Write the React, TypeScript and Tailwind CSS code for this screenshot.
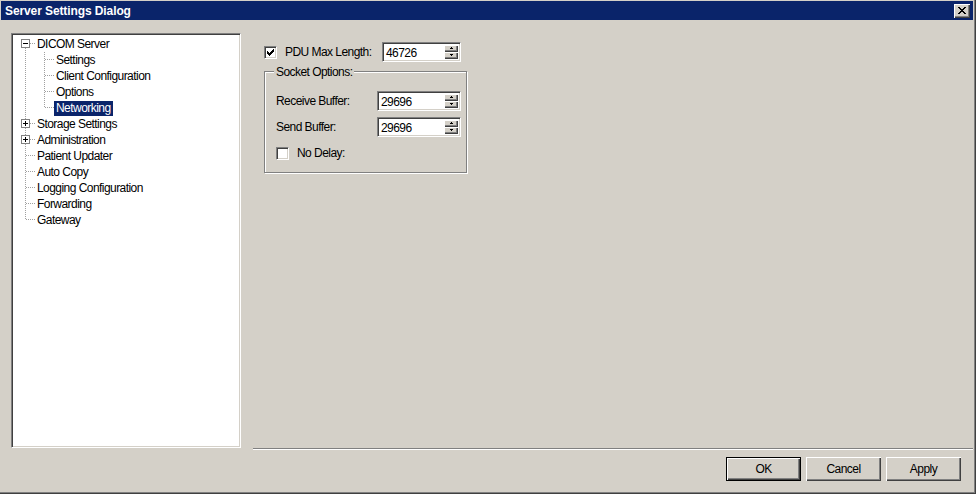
import React from "react";

const FONT = "font-['Liberation_Sans',Arial,sans-serif]";

type Row = {
  label: string;
  level: 0 | 1;
  box?: "minus" | "plus";
  first?: boolean;
  last?: boolean;
  lastChild?: boolean;
  selected?: boolean;
};

const rows: Row[] = [
  { label: "DICOM Server", level: 0, box: "minus", first: true },
  { label: "Settings", level: 1 },
  { label: "Client Configuration", level: 1 },
  { label: "Options", level: 1 },
  { label: "Networking", level: 1, selected: true, lastChild: true },
  { label: "Storage Settings", level: 0, box: "plus" },
  { label: "Administration", level: 0, box: "plus" },
  { label: "Patient Updater", level: 0 },
  { label: "Auto Copy", level: 0 },
  { label: "Logging Configuration", level: 0 },
  { label: "Forwarding", level: 0 },
  { label: "Gateway", level: 0, last: true },
];

const dot = { stroke: "#a0a0a0", strokeDasharray: "1 1", shapeRendering: "crispEdges" as const, strokeWidth: 1 };

function TreeGutter({ r }: { r: Row }) {
  const w = r.level === 1 ? 41 : 22;
  return (
    <svg width={w} height={16} className="shrink-0 block">
      {r.level === 1 && <line x1={12.5} y1={0} x2={12.5} y2={16} {...dot} />}
      {r.level === 0 && !r.box && (
        <>
          <line x1={12.5} y1={0} x2={12.5} y2={r.last ? 8 : 16} {...dot} />
          <line x1={13} y1={7.5} x2={22} y2={7.5} {...dot} />
        </>
      )}
      {r.level === 0 && r.box && (
        <>
          {!r.first && <line x1={12.5} y1={0} x2={12.5} y2={3} {...dot} />}
          <line x1={12.5} y1={12} x2={12.5} y2={16} {...dot} />
          <line x1={17} y1={7.5} x2={22} y2={7.5} {...dot} />
          <rect x={8.5} y={3.5} width={8} height={8} fill="#fff" stroke="#808080" shapeRendering="crispEdges" />
          <line x1={10} y1={7.5} x2={15} y2={7.5} stroke="#000" shapeRendering="crispEdges" />
          {r.box === "plus" && <line x1={12.5} y1={5} x2={12.5} y2={10} stroke="#000" shapeRendering="crispEdges" />}
        </>
      )}
      {r.level === 1 && (
        <>
          <line x1={31.5} y1={0} x2={31.5} y2={r.lastChild ? 8 : 16} {...dot} />
          <line x1={32} y1={7.5} x2={41} y2={7.5} {...dot} />
        </>
      )}
    </svg>
  );
}

function Tree() {
  return (
    <div className="w-[230px] h-[415px] shrink-0 border border-t-[#808080] border-l-[#808080] border-b-white border-r-white shadow-[inset_1px_1px_0_#404040,inset_-1px_-1px_0_#d4d0c8] bg-white pl-[1px] pr-[2px] pt-[1px]">
      <div className="flex flex-col pt-[1px]">
        {rows.map((r) => (
          <div key={r.label} className="flex items-center h-[16px]">
            <TreeGutter r={r} />
            <span
              className={`h-[15px] flex items-center px-[2px] whitespace-nowrap ${
                r.selected ? "bg-[#0a246a] text-white" : "text-black"
              }`}
            >
              {r.label}
            </span>
          </div>
        ))}
      </div>
    </div>
  );
}

const checkPixels: [number, number][] = [
  [6, 0],
  [5, 1], [6, 1],
  [0, 2], [4, 2], [5, 2], [6, 2],
  [0, 3], [1, 3], [3, 3], [4, 3], [5, 3],
  [0, 4], [1, 4], [2, 4], [3, 4], [4, 4],
  [1, 5], [2, 5], [3, 5],
  [2, 6],
];

function Checkbox({ checked }: { checked?: boolean }) {
  return (
    <div className="w-[13px] h-[13px] shrink-0 bg-white border border-t-[#808080] border-l-[#808080] border-b-white border-r-white shadow-[inset_1px_1px_0_#404040,inset_-1px_-1px_0_#d4d0c8] flex items-center justify-center">
      {checked && (
        <svg width="7" height="7" viewBox="0 0 7 7" shapeRendering="crispEdges">
          {checkPixels.map(([x, y]) => (
            <rect key={`${x}-${y}`} x={x} y={y} width={1} height={1} fill="#000" />
          ))}
        </svg>
      )}
    </div>
  );
}

function SpinArrow({ up }: { up?: boolean }) {
  return (
    <div className="flex-1 bg-[#d4d0c8] shadow-[inset_1px_1px_0_#fff,inset_-1px_-1px_0_#404040,inset_-2px_-2px_0_#808080] flex items-center justify-center">
      <svg width="5" height="3" viewBox="0 0 5 3" shapeRendering="crispEdges">
        {up ? <path d="M2 0h1v1h1v1h-3v-1h1z" fill="#000" /> : <path d="M1 0h3v1h-1v1h-1v-1h-1z" fill="#000" />}
      </svg>
    </div>
  );
}

function Spin({ value, width }: { value: string; width: string }) {
  return (
    <div
      className={`${width} h-[20px] shrink-0 bg-white border border-t-[#808080] border-l-[#808080] border-b-white border-r-white shadow-[inset_1px_1px_0_#404040,inset_-1px_-1px_0_#d4d0c8] flex items-center pl-[3px] pr-[2px]`}
    >
      <span className="flex-1 text-black pt-[1px]">{value}</span>
      <div className="w-[14px] h-[14px] flex flex-col">
        <SpinArrow up />
        <SpinArrow />
      </div>
    </div>
  );
}

function Button({ label, def }: { label: string; def?: boolean }) {
  return (
    <div className={`w-[75px] h-[24px] ${def ? "border border-black" : ""}`}>
      <div className="w-full h-full bg-[#d4d0c8] shadow-[inset_1px_1px_0_#fff,inset_-1px_-1px_0_#404040,inset_-2px_-2px_0_#808080] flex items-center justify-center text-black">
        {label}
      </div>
    </div>
  );
}

export default function App() {
  return (
    <div
      className={`${FONT} text-[12px] tracking-[-0.55px] leading-none w-[976px] h-[494px] bg-[#d4d0c8] pt-[1px] pl-[1px] pr-[3px] pb-[3px] flex flex-col shadow-[inset_-1px_-1px_0_#404040,inset_-2px_-2px_0_#808080] overflow-hidden`}
    >
      {/* Title bar */}
      <div className="h-[19px] bg-[#0a246a] flex items-center justify-between pl-[4px] pr-[3px] shrink-0">
        <span className="text-white font-bold text-[12px] tracking-[-0.1px]">Server Settings Dialog</span>
        <div className="w-[16px] h-[14px] bg-[#d4d0c8] shadow-[inset_1px_1px_0_#fff,inset_-1px_-1px_0_#404040,inset_-2px_-2px_0_#808080] flex items-center justify-center pb-[1px]">
          <svg width="8" height="7" viewBox="0 0 8 7" shapeRendering="crispEdges">
            <path d="M0 0h2v1h1v1h2v-1h1v-1h2v1h-1v1h-1v1h-1v1h1v1h1v1h1v1h-2v-1h-1v-1h-2v1h-1v1h-2v-1h1v-1h1v-1h1v-1h-1v-1h-1z" fill="#000" />
          </svg>
        </div>
      </div>

      {/* Body */}
      <div className="flex-1 flex flex-col">
        <div className="flex pt-[13px] pl-[10px]">
          <Tree />
          <div className="ml-[12px] pl-[11px] pt-[9px] flex flex-col">
            <div className="flex items-center h-[20px]">
              <Checkbox checked />
              <span className="ml-[8px] w-[97px] text-black">PDU Max Length:</span>
              <Spin value="46726" width="w-[79px]" />
            </div>

            <div className="relative mt-[9px] w-[203px] h-[102px] border border-[#808080] shadow-[inset_1px_1px_0_#fff,1px_1px_0_#fff] pl-[11px] pt-[19px]">
              <span className="absolute left-[9px] top-[-6px] bg-[#d4d0c8] px-[2px] text-black">Socket Options:</span>
              <div className="flex items-center h-[20px]">
                <span className="w-[101px] text-black">Receive Buffer:</span>
                <Spin value="29696" width="w-[84px]" />
              </div>
              <div className="flex items-center h-[20px] mt-[6px]">
                <span className="w-[101px] text-black">Send Buffer:</span>
                <Spin value="29696" width="w-[84px]" />
              </div>
              <div className="flex items-center h-[14px] mt-[9px]">
                <Checkbox />
                <span className="ml-[8px] text-black">No Delay:</span>
              </div>
            </div>
          </div>
        </div>

        <div className="ml-[252px] h-[2px] border-t border-t-[#808080] border-b border-b-white shrink-0" />

        <div className="flex justify-end gap-[5px] mt-[7px] pr-[12px]">
          <Button label="OK" def />
          <Button label="Cancel" />
          <Button label="Apply" />
        </div>
      </div>
    </div>
  );
}
